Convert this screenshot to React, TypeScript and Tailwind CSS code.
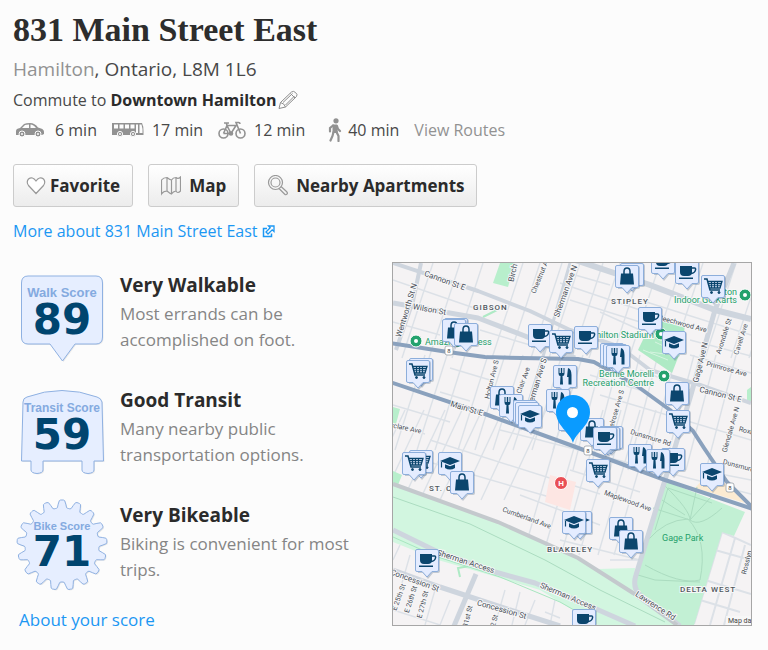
import React from "react";

type Kind = "bag" | "cup" | "cart" | "fork" | "grad" | "none";

const NAVY = "#0b466e";

/* Map markers: horizontal centre, top edge, glyph. Later entries are drawn on top. */
const MARKERS: [number, number, Kind][] = [
  [632, 263, "none"], [627, 265, "bag"], [663, 251, "cup"], [687, 261, "cup"], [713, 275, "cart"],
  [650, 307, "cup"], [456, 318, "none"], [454, 319, "bag"], [466, 323, "bag"], [540, 324, "cup"],
  [586, 326, "cup"], [561, 330, "cart"], [674, 331, "grad"], [612, 343, "none"], [615, 344, "none"],
  [618, 345, "fork"], [421, 358, "none"], [418, 360, "cart"], [565, 365, "fork"], [677, 382, "bag"],
  [502, 386, "bag"], [558, 389, "fork"], [511, 394, "fork"], [525, 400, "none"], [527, 402, "none"],
  [530, 405, "grad"], [570, 408, "fork"], [678, 410, "cart"], [592, 418, "bag"], [611, 426, "none"],
  [608, 427, "none"], [605, 427, "cup"], [640, 444, "fork"], [673, 448, "cup"], [658, 449, "fork"],
  [421, 450, "cart"], [414, 452, "cart"], [450, 452, "grad"], [598, 459, "cart"], [712, 463, "grad"],
  [462, 471, "bag"], [580, 511, "grad"], [574, 511, "grad"], [621, 517, "bag"], [631, 530, "bag"],
  [427, 549, "cup"], [584, 609, "cup"],
];

function Glyph({ kind }: { kind: Kind }) {
  switch (kind) {
    case "bag":
      return (
        <g>
          <path d="M-6 -2.500H6L7 8.500H-7Z" fill={NAVY} />
          <path d="M-3 -1V-4.500Q-3 -8 0 -8T3 -4.500V-1" fill="none" stroke={NAVY} strokeWidth="1.500" />
        </g>
      );
    case "cup":
      return (
        <g fill={NAVY}>
          <path d="M-7 -6H5V0Q5 4 1 4H-3Q-7 4 -7 0Z" />
          <path d="M5 -4H7.500Q9 -4 8.500 -2Q8 1 4 1.500" fill="none" stroke={NAVY} strokeWidth="1.500" />
          <path d="M-8 5.500H6V7H-8Z" />
        </g>
      );
    case "cart":
      return (
        <g fill="none" stroke={NAVY}>
          <path d="M-9 -7H-6L-3 4H7" strokeWidth="1.500" />
          <path d="M-5.500 -4.500H9L7 2H-3.500" strokeWidth="1.300" />
          <path d="M-5 -2.400H8M-4 -0.300H7.500M-1.500 -4V2M1.500 -4V2M4.500 -4V2" strokeWidth="1.100" />
          <circle cx="-1.500" cy="6.500" r="1" fill={NAVY} />
          <circle cx="6" cy="6.500" r="1" fill={NAVY} />
        </g>
      );
    case "fork":
      return (
        <g fill={NAVY}>
          <path d="M-6.500 -8V-2.500Q-6.500 0 -4.500 0L-5 8.500H-2L-2.500 0Q-0.500 0 -0.500 -2.500V-8H-1.500V-3H-2.800V-8H-4.200V-3H-5.500V-8Z" />
          <path d="M3 -8Q6.500 -7 6.500 -1V8.500H3.500V1H2Z" />
        </g>
      );
    case "grad":
      return (
        <g fill={NAVY}>
          <path d="M0 -6L10 -2L0 2L-10 -2Z" />
          <path d="M-5 1.200L0 3.200L5 1.200V5Q0 8 -5 5Z" />
          <path d="M-8.500 -1V4.500" stroke={NAVY} strokeWidth="1.200" />
        </g>
      );
    default:
      return null;
  }
}

function Marker({ x, y, kind }: { x: number; y: number; kind: Kind }) {
  return (
    <g transform={`translate(${x} ${y})`}>
      <path d="M-9 1H11Q13 1 13 3V22Q13 24 11 24H6L1 30L-4 24H-9Z" fill="#3c5878" opacity="0.28" />
      <path
        d="M-10 0.500H10Q11.500 0.500 11.500 2V21Q11.500 22.500 10 22.500H5L0 28L-5 22.500H-10Q-11.500 22.500 -11.500 21V2Q-11.500 0.500 -10 0.500Z"
        fill="#e4ecff"
        stroke="#8daedb"
      />
      <g transform="translate(0 11)">
        <Glyph kind={kind} />
      </g>
    </g>
  );
}

const STREET_LABELS: [number, number, number, string, number][] = [
  [444, 283, 20, "Cannon St E", 8],
  [429, 312, 10, "Wilson St", 8],
  [409, 311, -73, "Wentworth St N", 8],
  [494, 380, -76, "Holton Ave S", 7],
  [524, 385, -70, "St Clair Ave", 7],
  [539, 385, -73, "Sherman Ave S", 8],
  [543, 275, -68, "Chestnut Ave", 7],
  [568, 292, -70, "Sherman Ave N", 8],
  [517, 266, -78, "Birch Ave", 8],
  [466, 411, 17, "Main St E", 8],
  [682, 326, 15, "Beechwood Ave", 7],
  [703, 363, -76, "Gage Ave N", 8],
  [726, 337, -72, "Avondale St", 7],
  [743, 340, -72, "Cavell Ave", 7],
  [726, 371, 15, "Primrose Ave", 7],
  [720, 397, 14, "Cannon St E", 8],
  [733, 430, -74, "Glendale Ave N", 7],
  [618, 412, -74, "Melrose Ave S", 7],
  [650, 440, 17, "Dunsmure Rd", 7],
  [738, 468, 15, "Dunsmure", 7],
  [746, 433, 14, "Roxb", 7],
  [404, 430, 12, "arclare Ave", 7],
  [627, 503, 20, "Maplewood Ave", 7],
  [526, 520, 20, "Cumberland Ave", 7],
  [465, 564, 18, "Sherman Access", 8],
  [567, 599, 23, "Sherman Access", 8],
  [414, 583, 20, "Concession St", 8],
  [501, 612, 16, "Concession St", 8],
  [654, 608, 33, "Lawrence Rd", 8],
  [401, 598, -70, "E 25th St", 7],
  [413, 600, -72, "E 26th St", 7],
  [425, 605, -76, "E 27th St", 7],
  [470, 617, -76, "31st St", 7],
  [496, 623, -76, "32 St", 7],
  [749, 563, -76, "Rosslyn", 7],
];

const UPPER = [433, 460, 483, 523, 540, 562, 580, 603, 620, 643, 660, 682, 703, 736, 762, 780];
const MIDDLE = [425, 447, 465, 488, 505, 523, 543, 562, 583, 603, 620, 640, 658, 676, 694, 716, 736];
const LOWER = [405, 424, 445, 462, 482, 503, 523, 546, 565, 585, 603, 621, 640, 656];

function NeighbourhoodMap() {
  return (
    <svg
      viewBox="393 263 358 362"
      preserveAspectRatio="xMidYMid slice"
      className="block h-[362px] w-full"
      role="img"
      aria-label="Map of the area around 831 Main Street East"
      fontFamily='Roboto, "Noto Sans", sans-serif'
    >
      <rect x="393" y="263" width="358" height="362" fill="#f5f3f4" />
      {/* street grid */}
      <g fill="none" stroke="#dce1e7" strokeWidth="1.400">
        {UPPER.map((x) => <path key={x} d={`M${x} 263L${x - 31} 358`} />)}
        {MIDDLE.map((x) => <path key={x} d={`M${x} 355L${x - 30} ${450 + (x > 600 ? 20 : 0)}`} />)}
        {LOWER.map((x) => <path key={x} d={`M${x} 410L${x - 42} ${x > 560 ? 555 : 500}`} />)}
        <path d="M393 280L480 310M560 283L640 310M570 300L640 322M575 275L610 285M393 322L440 335M480 330L530 345M600 312L640 330M640 300L751 335M690 340L751 356M690 355L751 373M450 368L490 380M440 392L470 401M393 405L450 422M393 424L425 434M405 455L560 500M430 440L600 494M500 430L751 494M570 470L640 492M560 540L640 560M520 495L600 525M600 395L751 440M640 370L690 390M590 375L640 390M700 470L751 480M640 560L610 560" />
        <path d="M751 545L722 532L694 624M751 560L715 550M735 538L710 625M745 545L724 625M705 580L751 594M700 600L740 612" strokeWidth="2" />
        <path d="M393 610L440 625M435 590L425 625M450 600L440 625M505 590L495 625M520 592L512 625M535 600L525 625M545 612L560 618M393 560L400 545M410 555L400 590M555 600L550 625" />
      </g>
      {/* parks and open ground */}
      <path d="M393 483L498 522L578 558L598 569L635 568L633 593L677 625H598L540 590L490 575L438 560L393 542Z" fill="#d2f6e0" />
      <path d="M665 481L745 512L734 536L722 532L694 625H677L633 590Z" fill="#c2f0d4" />
      <path d="M652 321L685 323L683 345L672 373L638 350Z" fill="#aeeac5" />
      <path d="M500 263H515L508 287L493 283Z" fill="#b8efcc" />
      <path d="M393 471L402 475L398 485H393Z" fill="#b8efcc" />
      <path d="M393 407L400 409L396 424L393 427Z" fill="#b8efcc" />
      <path d="M747 390L751 387V402L747 400Z" fill="#b8efcc" />
      <path d="M550 475L576 482L570 510L545 502Z" fill="#fde6e3" />
      <path d="M704 478L727 484L745 503L695 488Z" fill="#fcebd2" />
      <path d="M483 317L497 310M460 577L458 568L470 566" stroke="#aeeac5" strokeWidth="2" fill="none" />
      <g fill="none" stroke="#abdcc0" strokeWidth="1">
        <path d="M393 497L470 524L545 560L600 590L665 622" />
        <path d="M393 537L438 557L500 577L560 602L595 622" stroke="#a7e6bf" />
        <path d="M664 485Q690 510 690 520Q700 528 722 508M653 508L690 520L711 497M668 488L712 503M662 500L685 515M648 540Q665 520 688 519Q708 540 700 580Q680 585 645 565M638 575L655 580L700 582M668 488L655 530M697 487L690 520" />
        <path d="M643 350L668 360M655 342L672 350M650 352L680 356" stroke="#d5f4e0" />
      </g>
      {/* secondary roads */}
      <g fill="none" stroke="#ced5de" strokeLinejoin="round">
        <path d="M393 263L478 291L530 311L570 330L620 347L650 370L700 385L751 403" strokeWidth="4" />
        <path d="M393 303L478 318L525 336L575 358" strokeWidth="5" />
        <path d="M540 248L590 265L650 285L715 310L751 319" strokeWidth="6" />
        <path d="M734 263L715 310L690 398L665 480L636 575Q632 587 640 595L680 626" strokeWidth="5" />
        <path d="M421 263L413 301L396 350" strokeWidth="4" />
        <path d="M570 263L545 350L520 430" strokeWidth="3" />
        <path d="M476 574L454 626" strokeWidth="5" />
        <path d="M393 570L440 587L510 610L560 626" strokeWidth="5" />
        <path d="M393 530L438 552L495 572L535 583L578 601L635 626" strokeWidth="5" />
      </g>
      <path d="M393 484L498 522L578 558L633 593L677 625" fill="none" stroke="#c4c9cd" strokeWidth="4" />
      {/* highways */}
      <g fill="none" stroke="#8aa1bd" strokeWidth="4" strokeLinejoin="round">
        <path d="M390 343L448 352L485 357L521 358L578 359L594 362L637 386L670 410L693 431L704 448L727 482L753 508" />
        <path d="M390 382L485 414L573 446L665 480L753 509" />
      </g>
      {/* street names */}
      <g fill="#4a5058" stroke="#f7f7f8" strokeWidth="2" paintOrder="stroke" textAnchor="middle">
        {STREET_LABELS.map(([x, y, angle, text, size], i) => (
          <text key={i} transform={`translate(${x} ${y}) rotate(${angle})`} fontSize={size}>{text}</text>
        ))}
      </g>
      <g fontSize="8" fill="#50565c" fontWeight="500" stroke="#f7f7f8" strokeWidth="2" paintOrder="stroke" letterSpacing="1">
        <text x="473" y="310">GIBSON</text>
        <text x="611" y="304">STIPLEY</text>
        <text x="429" y="491">ST. CLAIR</text>
        <text x="547" y="552">BLAKELEY</text>
        <text x="680" y="592">DELTA WEST</text>
      </g>
      <g fontSize="9" fill="#26a06b" stroke="#f7f7f8" strokeWidth="2" paintOrder="stroke">
        <text x="425" y="345">Amazing Fitness</text>
        <text x="737" y="295" textAnchor="end">Hamilton</text>
        <text x="737" y="303" textAnchor="end">Indoor Go Karts</text>
        <text x="654" y="338" textAnchor="end">Hamilton Stadium</text>
        <text x="654" y="377" textAnchor="end">Bernie Morelli</text>
        <text x="654" y="386" textAnchor="end">Recreation Centre</text>
        <text x="662" y="541" stroke="#c2f0d4">Gage Park</text>
      </g>
      {[[416, 341], [745, 295], [664, 376], [661, 334]].map(([x, y]) => (
        <g key={x}>
          <circle cx={x} cy={y} r="6" fill="#23a26d" stroke="#fff" />
          <circle cx={x} cy={y} r="2" fill="#fff" />
        </g>
      ))}
      <circle cx="561" cy="483" r="6.500" fill="#e94f55" stroke="#fff" />
      <text x="561" y="486" fontSize="8" fontWeight="700" textAnchor="middle" fill="#fff">H</text>
      {[[449, 351], [588, 451], [730, 488]].map(([x, y]) => (
        <g key={x}>
          <rect x={x - 4} y={y - 5} width="8" height="9" rx="2" fill="#fff" stroke="#8b949c" strokeWidth="0.700" />
          <text x={x} y={y + 2} fontSize="6" textAnchor="middle" fill="#444">8</text>
        </g>
      ))}
      {MARKERS.map(([x, y, kind], i) => <Marker key={i} x={x} y={y} kind={kind} />)}
      <path d="M573 443C570 432 556 426 556 412A17 17 0 0 1 590 412C590 426 576 432 573 443Z" fill="#0a9bff" />
      <circle cx="572.500" cy="412.500" r="5.500" fill="#fff" />
      <rect x="726" y="616" width="25" height="9" fill="#f8f8f8" opacity="0.800" />
      <text x="728" y="623" fontSize="7" fill="#444">Map dat</text>
    </svg>
  );
}

function gearPath() {
  const teeth = 17;
  const points: string[] = [];
  for (let i = 0; i < teeth * 12; i++) {
    const a = (i / (teeth * 12)) * Math.PI * 2 - Math.PI / 2;
    const wave = Math.cos((i / 12) * Math.PI * 2);
    const r = 41 + 4 * Math.max(-1, Math.min(1, wave * 1.7));
    points.push(`${(50 + r * Math.cos(a)).toFixed(1)} ${(46 + r * Math.sin(a)).toFixed(1)}`);
  }
  return `M${points.join("L")}Z`;
}

const SHAPES = {
  walk: "M16 7H84Q90.500 7 90.500 14V68Q90.500 75 84 75H63L50.500 92L38 75H16Q9.500 75 9.500 68V14Q9.500 7 16 7Z",
  transit: "M11 18Q11 14 15 13Q50 0 85 13Q89 14 90 18L91.500 77H82V86Q82 89 76 89.500Q70 89 70 86V77H31V86Q31 89 25 89.500Q19 89 19 86V77H9.500Z",
  bike: gearPath(),
};

/* Baselines and label size for the text inside each badge. */
const BADGE_TEXT = {
  walk: { labelY: 28, labelSize: 13, scoreY: 65 },
  transit: { labelY: 28, labelSize: 12, scoreY: 65 },
  bike: { labelY: 31, labelSize: 11, scoreY: 67 },
};

function Badge({ shape, label, score }: { shape: keyof typeof SHAPES; label: string; score: number }) {
  const t = BADGE_TEXT[shape];
  return (
    <svg viewBox="1 0 100 100" className="size-[100px] shrink-0" role="img" aria-label={`${label} ${score}`}>
      <path d={SHAPES[shape]} transform="translate(1 1)" fill="#000" opacity="0.080" />
      <path d={SHAPES[shape]} fill="#e6eeff" stroke="#8fb1e2" strokeLinejoin="round" />
      <text
        x="50" y={t.labelY} textAnchor="middle" fill="#84aae0" fontWeight="700"
        fontFamily='"Liberation Sans Narrow", "Liberation Sans", sans-serif' fontSize={t.labelSize}
      >
        {label}
      </text>
      <text
        x="50" y={t.scoreY} textAnchor="middle" fill="#00456f" fontWeight="700"
        fontFamily='"DejaVu Sans", sans-serif' fontSize="42"
      >
        {score}
      </text>
    </svg>
  );
}

const SCORES = [
  { shape: "walk", label: "Walk Score", score: 89, title: "Very Walkable", text: "Most errands can be accomplished on foot." },
  { shape: "transit", label: "Transit Score", score: 59, title: "Good Transit", text: "Many nearby public transportation options." },
  { shape: "bike", label: "Bike Score", score: 71, title: "Very Bikeable", text: "Biking is convenient for most trips." },
] as const;

const CarIcon = () => (
  <svg viewBox="0 0 30 16" className="h-4 w-[30px]" aria-hidden="true">
    <path d="M1 13V9Q1 6.500 5 6L9 2Q11 1 15 1Q20 1 23 5.500L26 6.500Q29 7.500 29 10V12L27 13Z" fill="#929292" />
    <path d="M7 6L10 3Q11 2.500 14 2.500V6ZM15.500 2.500Q18.500 2.500 21 6H15.500Z" fill="#fcfcfc" />
    <circle cx="7" cy="12" r="3" fill="#929292" stroke="#fcfcfc" />
    <circle cx="23" cy="12" r="3" fill="#929292" stroke="#fcfcfc" />
    <circle cx="7" cy="12" r="1" fill="#fcfcfc" />
    <circle cx="23" cy="12" r="1" fill="#fcfcfc" />
  </svg>
);

const BusIcon = () => (
  <svg viewBox="0 0 32 16" className="h-4 w-8" aria-hidden="true">
    <path d="M0 1H30Q31.500 4 31.500 9V13H0Z" fill="#929292" />
    <path d="M2 2.500H6V6.500H2ZM7.500 2.500H11.500V6.500H7.500ZM13 2.500H17V6.500H13ZM18.500 2.500H22.500V6.500H18.500ZM24 2.500H26V11H24ZM27.500 2.500H29.500L30.500 7V11H27.500Z" fill="#fcfcfc" />
    <circle cx="8" cy="12" r="2.600" fill="#929292" stroke="#fcfcfc" />
    <circle cx="21" cy="12" r="2.600" fill="#929292" stroke="#fcfcfc" />
    <circle cx="8" cy="12" r="1" fill="#fcfcfc" />
    <circle cx="21" cy="12" r="1" fill="#fcfcfc" />
  </svg>
);

const BikeIcon = () => (
  <svg viewBox="0 0 28 20" className="h-5 w-7" aria-hidden="true" fill="none" stroke="#929292" strokeWidth="1.600">
    <circle cx="5.500" cy="13.500" r="4.500" />
    <circle cx="22.500" cy="13.500" r="4.500" />
    <path d="M5.500 13.500L9 5.500H18L13 13.500H5.500M13 13.500L9 5.500L8.500 3.500M6 3H11M22.500 13.500L18 2.500H20.500Q22 2.500 22 4" />
    <circle cx="13" cy="13.500" r="1.500" fill="#929292" />
  </svg>
);

const WalkIcon = () => (
  <svg viewBox="0 0 14 24" className="h-6 w-3.5" aria-hidden="true">
    <circle cx="8" cy="2.800" r="2.600" fill="#929292" />
    <path d="M4.500 6.500H9L10 15H4.500Z" fill="#929292" />
    <path d="M5 7.500L2 10V13.500M9 8L10 11L12 13M5.500 14L4.500 18L2.500 22.500M8.500 14L10.500 18V23" stroke="#929292" strokeWidth="2.200" fill="none" strokeLinecap="round" />
  </svg>
);

const PencilIcon = () => (
  <svg viewBox="0 0 20 20" className="size-5" aria-hidden="true" fill="none" stroke="#8c8c8c">
    <path d="M1 18.500L2.500 12.500L13.500 2Q15.500 0.500 17.500 2.500Q20 4.500 18.500 6.500L7.500 17Z M2.500 12.500Q6.500 13.500 7.500 17M12.500 3.500L17 8M5 12.500L14.500 3.500M7.500 15L16.500 6" />
  </svg>
);

const HeartIcon = () => (
  <svg viewBox="0 0 20 20" className="size-5" aria-hidden="true" fill="#fff" stroke="#999" strokeWidth="1.200">
    <path d="M10 17.500L2.500 9.500Q0 6 2.500 3Q6.500 0 10 5Q13.500 0 17.500 3Q20 6 17.500 9.500Z" />
  </svg>
);

const MapIcon = () => (
  <svg viewBox="0 0 20 20" className="size-5" aria-hidden="true" fill="none" stroke="#999" strokeWidth="1.200">
    <path d="M0.500 4Q2.500 1.500 6 1.500Q9 4 10.500 4Q12 1.500 15 1.500Q17 3.500 19.500 1V15Q16.500 18 15 15Q12 15.500 10.500 18Q9 17.500 6 15Q2.500 15 0.500 18ZM6 1.500V15M10.500 4V18M15 1.500V15" />
  </svg>
);

const SearchIcon = () => (
  <svg viewBox="0 0 21 21" className="size-[21px]" aria-hidden="true" fill="none" stroke="#999" strokeWidth="1.200">
    <circle cx="8.500" cy="7.500" r="7" />
    <circle cx="8.500" cy="7.500" r="4.500" />
    <path d="M12 13.500L17.500 19Q19 20.500 20 19Q21 18 19.500 16.500L14 11.500" />
  </svg>
);

const ExternalIcon = () => (
  <svg viewBox="0 0 13 13" className="size-[13px]" aria-hidden="true" fill="none" stroke="#1b97f3" strokeWidth="1.500">
    <path d="M5 3.500H1.500V11.500H9.500V8.500" />
    <path d="M6.500 1H12V6.500L10.200 4.800L6 9L4 7L8.200 2.800Z" strokeWidth="1.300" />
  </svg>
);

const BUTTON =
  "flex h-[43px] items-center rounded-[3px] border border-[#ccc] bg-linear-to-b from-white to-[#ececec] px-3 text-[17px] font-bold text-[#2b2b2b]";

export default function App() {
  return (
    <main className="min-h-screen bg-[#fcfcfc] px-[13px] pt-2 pb-3 font-['Open_Sans','Noto_Sans',sans-serif] text-[#484848]">
      <h1 className="font-['Liberation_Serif',serif] text-[34px] leading-[44px] font-bold text-[#2d2d2d]">
        831 Main Street East
      </h1>
      <p className="mt-1 text-[19px] leading-[26px]">
        <a href="#hamilton" className="text-[#929292]">Hamilton</a>, Ontario, L8M 1L6
      </p>
      <div className="mt-2 flex items-center gap-0.5 text-base leading-5">
        <p>Commute to <b className="text-[#2b2b2b]">Downtown Hamilton</b></p>
        <button type="button" aria-label="Edit commute destination"><PencilIcon /></button>
      </div>
      <ul className="mt-2 flex h-6 items-center text-base">
        <li className="mr-[15px] ml-0.5 flex items-center gap-2.5"><CarIcon />6 min</li>
        <li className="mr-[15px] flex items-center gap-2"><BusIcon />17 min</li>
        <li className="mr-[23px] flex items-center gap-2"><BikeIcon />12 min</li>
        <li className="flex items-center gap-1.5"><WalkIcon />40 min</li>
        <li className="ml-[15px]"><a href="#routes" className="text-[#929292]">View Routes</a></li>
      </ul>
      <div className="mt-[22px] flex gap-[15px]">
        <button type="button" className={`${BUTTON} gap-1`}><HeartIcon />Favorite</button>
        <button type="button" className={`${BUTTON} gap-2`}><MapIcon />Map</button>
        <button type="button" className={`${BUTTON} gap-2`}><SearchIcon />Nearby Apartments</button>
      </div>
      <a href="#more" className="mt-3 flex w-fit items-center gap-1 text-base leading-6 text-[#1b97f3]">
        More about 831 Main Street East <ExternalIcon />
      </a>
      <div className="mt-[19px] mr-[3px] flex items-start gap-4">
        <section className="min-w-0 flex-1 pt-[7px]">
          {SCORES.map((s) => (
            <div key={s.shape} className="flex h-[115px] items-start gap-[7px]">
              <Badge shape={s.shape} label={s.label} score={s.score} />
              <div>
                <h2 className="pt-0.5 text-[19px] leading-7 font-bold text-[#2b2b2b]">{s.title}</h2>
                <p className="mt-0.5 text-[17px] leading-[26px] text-[#858585]">{s.text}</p>
              </div>
            </div>
          ))}
          <a href="#about" className="-mt-1.5 ml-1.5 block w-fit text-[17px] leading-6 text-[#1b97f3]">About your score</a>
        </section>
        <div className="w-[360px] shrink-0 border border-[#a6a6a6]">
          <NeighbourhoodMap />
        </div>
      </div>
    </main>
  );
}
